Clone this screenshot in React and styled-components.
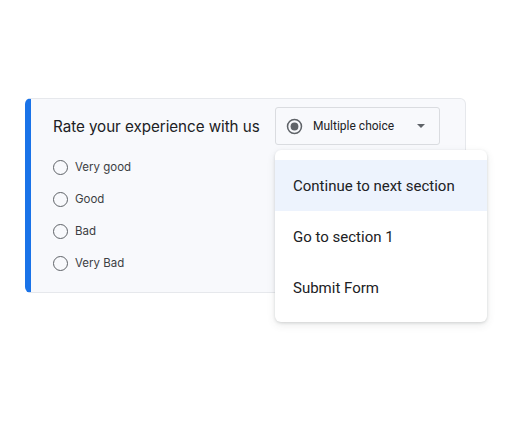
import styled, { createGlobalStyle } from "styled-components";

const Global = createGlobalStyle`
  body {
    margin: 0;
    background: #ffffff;
    font-family: "Inter", "Roboto", sans-serif;
  }
`;

const Page = styled.div`
  padding: 98px 0 0 25px;
  height: 421px;
  box-sizing: border-box;
`;

const Card = styled.div`
  width: 441px;
  height: 195px;
  box-sizing: border-box;
  background: #f8f9fc;
  border: 1px solid #e6e8ec;
  border-left: 6px solid #1a73e8;
  border-radius: 6px;
  padding: 8px 25px 14px 22px;
  display: flex;
  flex-direction: column;
`;

const Header = styled.div`
  display: flex;
  align-items: center;
  height: 38px;
`;

const Title = styled.div`
  font-size: 15.2px;
  color: #202124;
  letter-spacing: -0.05px;
`;

const SelectWrap = styled.div`
  position: relative;
  margin-left: auto;
`;

const Select = styled.div`
  width: 165px;
  height: 38px;
  box-sizing: border-box;
  border: 1px solid #dadce0;
  border-radius: 3px;
  background: #f8f9fc;
  display: flex;
  align-items: center;
  padding: 0 14px 0 10px;
  gap: 10px;
`;

const SelectLabel = styled.span`
  font-family: "Roboto", sans-serif;
  font-size: 12px;
  color: #202124;
  flex: 1;
`;

const Menu = styled.div`
  position: absolute;
  top: 43px;
  left: 0;
  width: 212px;
  box-sizing: border-box;
  background: #ffffff;
  border-radius: 6px;
  padding: 10px 0 9px;
  box-shadow: 0 1px 3px rgba(60, 64, 67, 0.18), 0 3px 8px rgba(60, 64, 67, 0.1);
`;

const MenuItem = styled.div`
  height: 51px;
  display: flex;
  align-items: center;
  padding-left: 18px;
  font-family: "Roboto", sans-serif;
  font-size: 15px;
  color: #202124;
  background: ${(p) => (p.$active ? "#edf3fd" : "transparent")};
`;

const Options = styled.div`
  margin-top: 6px;
  display: flex;
  flex-direction: column;
`;

const Option = styled.div`
  height: 32px;
  display: flex;
  align-items: center;
  gap: 7px;
  font-size: 11.5px;
  color: #3c4043;
`;

const Circle = styled.span`
  width: 15px;
  height: 15px;
  box-sizing: border-box;
  border: 1.6px solid #5f6368;
  border-radius: 50%;
`;

function RadioChecked() {
  return (
    <svg width="17" height="17" viewBox="0 0 20 20">
      <circle cx="10" cy="10" r="8.2" fill="none" stroke="#5f6368" strokeWidth="1.8" />
      <circle cx="10" cy="10" r="4.6" fill="#5f6368" />
    </svg>
  );
}

function Caret() {
  return (
    <svg width="8" height="4" viewBox="0 0 8 4">
      <path d="M0 0h8L4 4z" fill="#5f6368" />
    </svg>
  );
}

const options = ["Very good", "Good", "Bad", "Very Bad"];
const menu = ["Continue to next section", "Go to section 1", "Submit Form"];

export default function App() {
  return (
    <Page>
      <Global />
      <Card>
        <Header>
          <Title>Rate your experience with us</Title>
          <SelectWrap>
            <Select>
              <RadioChecked />
              <SelectLabel>Multiple choice</SelectLabel>
              <Caret />
            </Select>
            <Menu>
              {menu.map((m, i) => (
                <MenuItem key={m} $active={i === 0}>
                  {m}
                </MenuItem>
              ))}
            </Menu>
          </SelectWrap>
        </Header>
        <Options>
          {options.map((o) => (
            <Option key={o}>
              <Circle />
              {o}
            </Option>
          ))}
        </Options>
      </Card>
    </Page>
  );
}
